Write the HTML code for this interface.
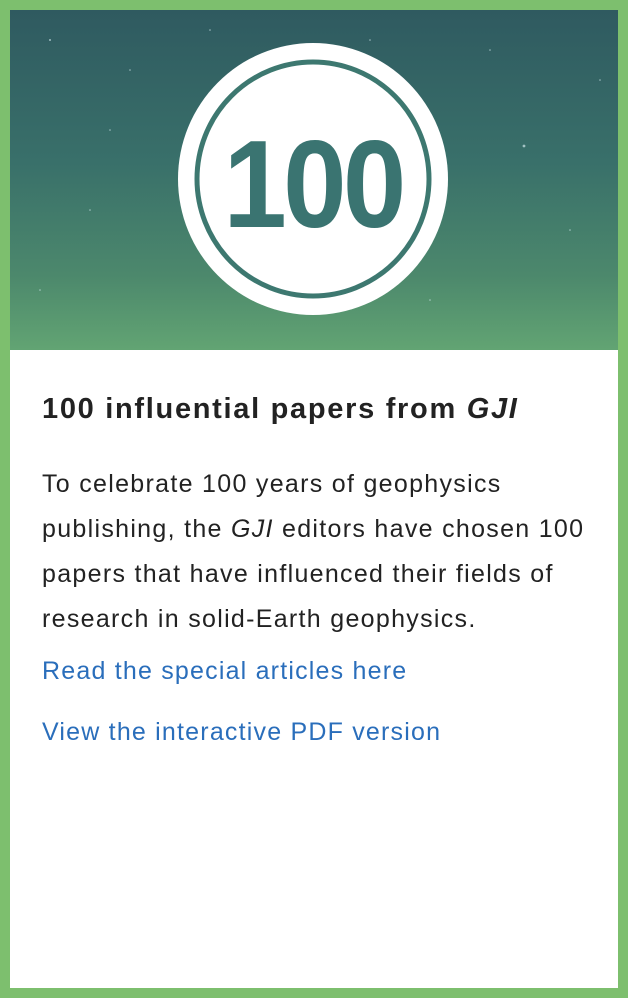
<!DOCTYPE html>
<html><head><meta charset="utf-8"><style>
html,body{margin:0;padding:0;}
body{width:628px;height:998px;background:#7dbf6e;position:relative;overflow:hidden;font-family:"Liberation Sans",sans-serif;}
.card{position:absolute;left:10px;top:10px;width:608px;height:978px;background:#fff;}
.img{position:absolute;left:0;top:0;width:608px;height:340px;background:linear-gradient(180deg,#2f5a60 0%,#39706a 45%,#4c886c 78%,#62a473 100%);overflow:hidden;}
.t{position:absolute;left:32px;margin:0;white-space:nowrap;}
h2.t{top:382px;font-size:29px;line-height:34px;font-weight:bold;color:#222;letter-spacing:1.7px;}
.b{font-size:25px;line-height:45px;color:#222;letter-spacing:1.3px;}
.l{font-size:25px;line-height:30px;color:#2a6ebb;letter-spacing:1.2px;}
</style></head><body>
<div class="card">
<div class="img">
<svg width="608" height="340" viewBox="0 0 608 340">
<g fill="#cfe6ea" opacity="0.7">
<circle cx="40" cy="30" r="1"/><circle cx="120" cy="60" r="0.8"/><circle cx="514" cy="136" r="1.4"/><circle cx="480" cy="40" r="0.8"/><circle cx="560" cy="220" r="0.8"/><circle cx="80" cy="200" r="0.8"/><circle cx="200" cy="20" r="0.8"/><circle cx="420" cy="290" r="0.8"/><circle cx="30" cy="280" r="0.8"/><circle cx="590" cy="70" r="0.8"/><circle cx="360" cy="30" r="0.8"/><circle cx="100" cy="120" r="0.8"/>
</g>
<ellipse cx="303" cy="169" rx="135" ry="136" fill="#fff"/>
<ellipse cx="303" cy="169" rx="116" ry="117" fill="none" stroke="#3d7870" stroke-width="5"/>
<text x="0" y="217" text-anchor="middle" font-family="Liberation Sans, sans-serif" font-weight="bold" font-size="124" fill="#3a7471" letter-spacing="-4" transform="translate(303 0) scale(0.92 1)">100</text>
</svg>
</div>
<h2 class="t">100 influential papers from <i>GJI</i></h2>
<div class="t b" style="top:452px">To celebrate 100 years of geophysics<br>publishing, the <i>GJI</i> editors have chosen 100<br>papers that have influenced their fields of<br>research in solid-Earth geophysics.</div>
<div class="t l" style="top:646px">Read the special articles here</div>
<div class="t l" style="top:707px">View the interactive PDF version</div>
</div>
</body></html>
